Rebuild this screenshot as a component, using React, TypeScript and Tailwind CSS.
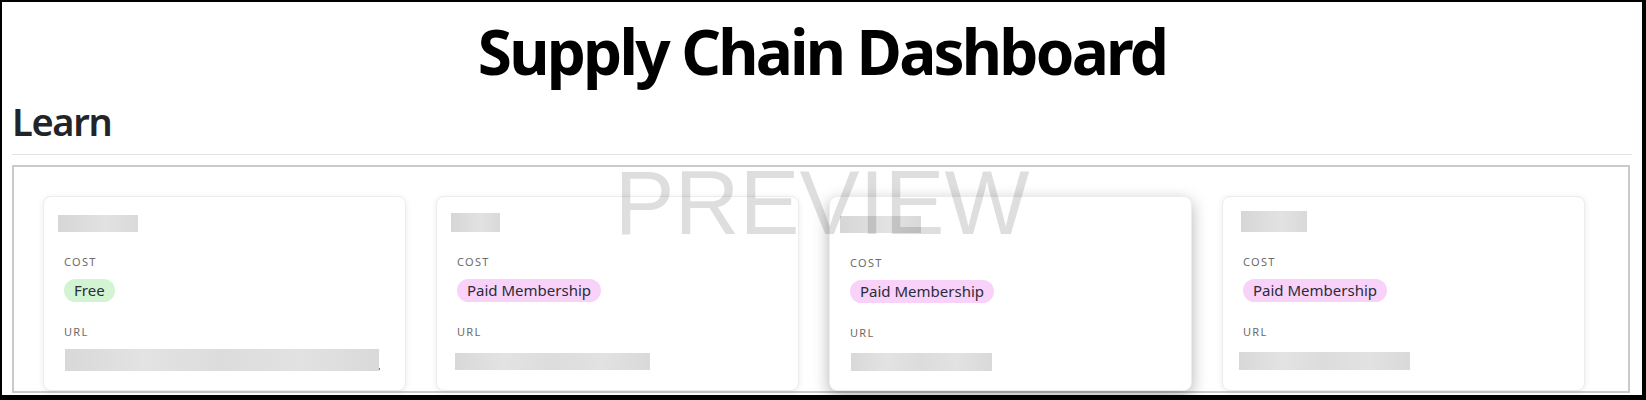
import React from "react";

type Resource = {
	cost: "Free" | "Paid Membership";
	titleBar: string;
	urlBar: string;
	highlight?: boolean;
};

const resources: Resource[] = [
	{
		cost: "Free",
		titleBar: "ml-[-6px] w-[80px] mt-[18px]",
		urlBar: "ml-[1px] w-[314px] h-[22px] mt-[9px]",
	},
	{
		cost: "Paid Membership",
		titleBar: "ml-[-6px] w-[49px] mt-[16px] h-[19px]",
		urlBar: "ml-[-2px] w-[195px] h-[17px] mt-[13px]",
	},
	{
		cost: "Paid Membership",
		titleBar: "ml-[-10px] w-[81px] mt-[19px] h-[16px] bg-[linear-gradient(90deg,#d4d4d4_0%,#c2c2c2_30%,#a9a9a9_45%,#bdbdbd_60%,#a8a8a8_75%,#cfcfcf_100%)]",
		urlBar: "ml-[1px] w-[141px] h-[18px] mt-[12px]",
		highlight: true,
	},
	{
		cost: "Paid Membership",
		titleBar: "ml-[-2px] w-[66px] mt-[14px] h-[21px]",
		urlBar: "ml-[-4px] w-[171px] h-[18px] mt-[12px]",
	},
];

const Label = ({ children }: { children: React.ReactNode }) => (
	<div className="text-[11px] leading-[16px] tracking-[0.12em] uppercase text-[#6b6b6b]">
		{children}
	</div>
);

const ResourceCard = ({ item }: { item: Resource }) => {
	const badge =
		item.cost === "Free"
			? "bg-[#d2f4d3]"
			: "bg-[#f8d2f9]";

	return (
		<div
			className={`w-[363px] h-[195px] shrink-0 rounded-lg bg-white border border-[#ececec] pl-[20px] flex flex-col ${
				item.highlight
					? "shadow-[0_5px_16px_rgba(0,0,0,0.3)]"
					: "shadow-[0_1px_6px_rgba(0,0,0,0.08)]"
			}`}
		>
			<div
				className={`h-[17px] bg-[linear-gradient(90deg,#d6d6d6,#e2e2e2_60%,#d9d9d9)] ${item.titleBar}`}
			/>
			<div className="mt-[22px]">
				<Label>Cost</Label>
			</div>
			<div className="mt-[8px]">
				<span
					className={`inline-flex items-center h-[23px] px-[10px] rounded-full text-[15px] text-[#2b2b3a] ${badge}`}
				>
					{item.cost}
				</span>
			</div>
			<div className="mt-[22px]">
				<Label>URL</Label>
			</div>
			<div className="flex items-end">
				<div
					className={`bg-[linear-gradient(90deg,#d8d8d8,#e3e3e3_25%,#dcdcdc_50%,#e2e2e2_75%,#d9d9d9)] ${item.urlBar}`}
				/>
				{item.cost === "Free" && (
					<span className="w-[1px] h-[2px] mb-[1px] bg-[#3b82f6]" />
				)}
			</div>
		</div>
	);
};

export default function App() {
	return (
		<div className="relative h-[400px] overflow-hidden bg-white border-black border-t-2 border-l-2 border-r-4 border-b-[5px] px-[10px] font-['Noto_Sans','Open_Sans',sans-serif]">
			<h1 className="pt-[12px] text-center text-[62px] leading-[1.2] tracking-[-0.045em] font-bold text-black">
				Supply Chain Dashboard
			</h1>
			<h2 className="mt-[11px] text-[38px] leading-[1.2] tracking-[-0.035em] font-semibold text-[#212529]">
				Learn
			</h2>
			<hr className="mt-[9px] border-0 border-t border-[#e2e3e5]" />
			<div className="mt-[10px] mr-[2px] border-2 border-[#cacacc] pt-[29px] pl-[29px] flex gap-[30px]">
				{resources.map((item, i) => (
					<ResourceCard key={i} item={item} />
				))}
			</div>
			<div className="pointer-events-none absolute inset-x-0 top-[156px] text-center text-[90px] leading-none font-['Liberation_Sans',Arial,sans-serif] text-[rgba(0,0,0,0.13)]">
				PREVIEW
			</div>
		</div>
	);
}
